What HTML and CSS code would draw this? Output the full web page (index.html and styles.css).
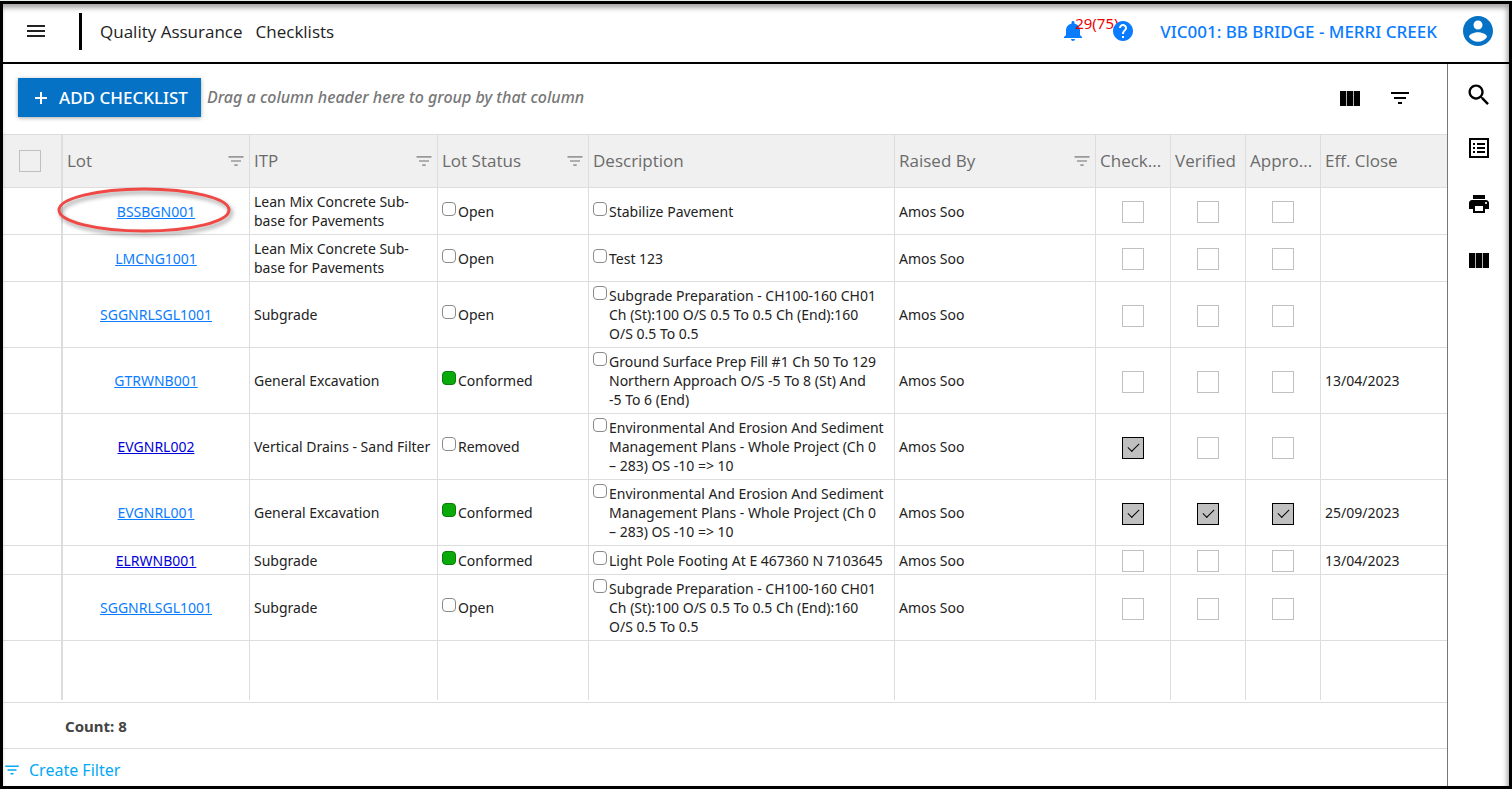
FILE: index.html
```html
<!DOCTYPE html>
<html lang="en">
<head>
  <meta charset="utf-8">
  <title>Quality Assurance - Checklists</title>
  <link rel="stylesheet" href="styles.css">
</head>
<body>
  <!-- shared icons -->
  <svg class="sprite" aria-hidden="true">
    <symbol id="i-filter" viewBox="0 0 24 24"><path d="M10 18h4v-2h-4v2zM3 6v2h18V6H3zm3 7h12v-2H6v2z"/></symbol>
    <symbol id="i-columns" viewBox="0 0 24 24"><path d="M2 5h6.200v15H2zM8.900 5h6.200v15H8.900zM15.800 5H22v15h-6.200z"/></symbol>
  </svg>

  <div class="app">
    <header class="topbar">
      <button class="icon-btn menu" type="button" aria-label="Menu">
        <svg width="24" height="24" viewBox="0 0 24 24"><path d="M3 6h18v2H3zM3 11h18v2H3zM3 16h18v2H3z"/></svg>
      </button>
      <nav class="crumbs">
        <span>Quality Assurance</span>
        <span>Checklists</span>
      </nav>
      <button class="icon-btn bell" type="button" aria-label="Notifications">
        <svg width="24" height="24" viewBox="0 0 24 24"><path d="M12 22c1.100 0 2-.9 2-2h-4c0 1.100.89 2 2 2zm7-6v-5c0-3.070-2.140-5.640-5.500-6.320V3.500c0-.83-.67-1.500-1.500-1.500s-1.500.67-1.500 1.500v1.180C7.130 5.360 5 7.920 5 11v5l-2 2v1h18v-1l-2-2z"/></svg>
        <span class="bell-count">29(75)</span>
      </button>
      <button class="icon-btn help" type="button" aria-label="Help">
        <svg width="24" height="24" viewBox="0 0 24 24"><path d="M12 2C6.480 2 2 6.480 2 12s4.480 10 10 10 10-4.480 10-10S17.520 2 12 2zm1 17h-2v-2h2v2zm2.070-7.750l-.9.920C13.450 12.900 13 13.500 13 15h-2v-.5c0-1.100.45-2.100 1.170-2.830l1.240-1.260c.37-.36.59-.86.59-1.410 0-1.100-.9-2-2-2s-2 .9-2 2H8c0-2.210 1.790-4 4-4s4 1.790 4 4c0 .88-.36 1.680-.93 2.250z"/></svg>
      </button>
      <a class="project" href="#">VIC001: BB BRIDGE - MERRI CREEK</a>
      <button class="icon-btn user" type="button" aria-label="Account">
        <svg width="36" height="36" viewBox="0 0 24 24"><path d="M12 2C6.480 2 2 6.480 2 12s4.480 10 10 10 10-4.480 10-10S17.520 2 12 2zm0 3c1.660 0 3 1.340 3 3s-1.340 3-3 3-3-1.340-3-3 1.340-3 3-3zm0 14.200c-2.500 0-4.710-1.280-6-3.220.03-1.990 4-3.080 6-3.080 1.990 0 5.970 1.090 6 3.080-1.290 1.940-3.500 3.220-6 3.220z"/></svg>
      </button>
    </header>

    <div class="body">
      <main class="main">
        <div class="toolbar">
          <button class="add-btn" type="button">
            <svg width="12" height="12" viewBox="0 0 12 12"><path d="M5 0h2v5h5v2H7v5H5V7H0V5h5z"/></svg>
            ADD CHECKLIST
          </button>
          <span class="group-hint">Drag a column header here to group by that column</span>
          <button class="icon-btn" type="button" aria-label="Column chooser"><svg width="24" height="24"><use href="#i-columns"/></svg></button>
          <button class="icon-btn" type="button" aria-label="Filter"><svg width="24" height="24"><use href="#i-filter"/></svg></button>
        </div>

        <div class="grid-wrap">
          <table class="grid">
            <colgroup>
              <col class="c-select"><col class="c-lot"><col class="c-itp"><col class="c-status"><col class="c-desc"><col class="c-raised"><col class="c-flag"><col class="c-flag"><col class="c-flag"><col>
            </colgroup>
            <thead>
              <tr>
                <th class="select"><input class="check" type="checkbox" aria-label="Select all"></th>
                <th><div class="head"><span>Lot</span><svg width="20" height="20"><use href="#i-filter"/></svg></div></th>
                <th><div class="head"><span>ITP</span><svg width="20" height="20"><use href="#i-filter"/></svg></div></th>
                <th><div class="head"><span>Lot Status</span><svg width="20" height="20"><use href="#i-filter"/></svg></div></th>
                <th><div class="head"><span>Description</span></div></th>
                <th><div class="head"><span>Raised By</span><svg width="20" height="20"><use href="#i-filter"/></svg></div></th>
                <th><div class="head"><span>Check...</span></div></th>
                <th><div class="head"><span>Verified</span></div></th>
                <th><div class="head"><span>Appro...</span></div></th>
                <th><div class="head"><span>Eff. Close</span></div></th>
              </tr>
            </thead>
            <tbody>
              <tr>
                <td class="select"></td>
                <td class="lot marked"><a href="#">BSSBGN001</a>
                  <svg class="ring" width="184" height="56" viewBox="0 0 184 56"><ellipse cx="90" cy="24" rx="85" ry="21"/></svg>
                </td>
                <td>Lean Mix Concrete Sub-base for Pavements</td>
                <td><label class="tick status"><input type="checkbox">Open</label></td>
                <td><label class="tick"><input type="checkbox">Stabilize Pavement</label></td>
                <td>Amos Soo</td>
                <td class="flag"><input class="check" type="checkbox" aria-label="Checked"></td>
                <td class="flag"><input class="check" type="checkbox" aria-label="Verified"></td>
                <td class="flag"><input class="check" type="checkbox" aria-label="Approved"></td>
                <td></td>
              </tr>
              <tr>
                <td class="select"></td>
                <td class="lot"><a href="#">LMCNG1001</a></td>
                <td>Lean Mix Concrete Sub-base for Pavements</td>
                <td><label class="tick status"><input type="checkbox">Open</label></td>
                <td><label class="tick"><input type="checkbox">Test 123</label></td>
                <td>Amos Soo</td>
                <td class="flag"><input class="check" type="checkbox" aria-label="Checked"></td>
                <td class="flag"><input class="check" type="checkbox" aria-label="Verified"></td>
                <td class="flag"><input class="check" type="checkbox" aria-label="Approved"></td>
                <td></td>
              </tr>
              <tr>
                <td class="select"></td>
                <td class="lot"><a href="#">SGGNRLSGL1001</a></td>
                <td>Subgrade</td>
                <td><label class="tick status"><input type="checkbox">Open</label></td>
                <td><label class="tick"><input type="checkbox">Subgrade Preparation - CH100-160 CH01 Ch (St):100 O/S 0.5 To 0.5 Ch (End):160 O/S 0.5 To 0.5</label></td>
                <td>Amos Soo</td>
                <td class="flag"><input class="check" type="checkbox" aria-label="Checked"></td>
                <td class="flag"><input class="check" type="checkbox" aria-label="Verified"></td>
                <td class="flag"><input class="check" type="checkbox" aria-label="Approved"></td>
                <td></td>
              </tr>
              <tr>
                <td class="select"></td>
                <td class="lot"><a href="#">GTRWNB001</a></td>
                <td>General Excavation</td>
                <td><label class="tick status"><input type="checkbox" checked>Conformed</label></td>
                <td><label class="tick"><input type="checkbox"><span>Ground Surface Prep Fill #1 Ch 50 To 129 Northern Approach O/S -5 To 8 (St) And<br>-5 To 6 (End)</span></label></td>
                <td>Amos Soo</td>
                <td class="flag"><input class="check" type="checkbox" aria-label="Checked"></td>
                <td class="flag"><input class="check" type="checkbox" aria-label="Verified"></td>
                <td class="flag"><input class="check" type="checkbox" aria-label="Approved"></td>
                <td>13/04/2023</td>
              </tr>
              <tr>
                <td class="select"></td>
                <td class="lot"><a class="visited" href="#">EVGNRL002</a></td>
                <td class="nowrap">Vertical Drains - Sand Filter</td>
                <td><label class="tick status"><input type="checkbox">Removed</label></td>
                <td><label class="tick"><input type="checkbox">Environmental And Erosion And Sediment Management Plans - Whole Project (Ch 0 – 283) OS -10 =&gt; 10</label></td>
                <td>Amos Soo</td>
                <td class="flag"><input class="check" type="checkbox" aria-label="Checked" checked></td>
                <td class="flag"><input class="check" type="checkbox" aria-label="Verified"></td>
                <td class="flag"><input class="check" type="checkbox" aria-label="Approved"></td>
                <td></td>
              </tr>
              <tr>
                <td class="select"></td>
                <td class="lot"><a href="#">EVGNRL001</a></td>
                <td>General Excavation</td>
                <td><label class="tick status"><input type="checkbox" checked>Conformed</label></td>
                <td><label class="tick"><input type="checkbox">Environmental And Erosion And Sediment Management Plans - Whole Project (Ch 0 – 283) OS -10 =&gt; 10</label></td>
                <td>Amos Soo</td>
                <td class="flag"><input class="check" type="checkbox" aria-label="Checked" checked></td>
                <td class="flag"><input class="check" type="checkbox" aria-label="Verified" checked></td>
                <td class="flag"><input class="check" type="checkbox" aria-label="Approved" checked></td>
                <td>25/09/2023</td>
              </tr>
              <tr>
                <td class="select"></td>
                <td class="lot"><a class="visited" href="#">ELRWNB001</a></td>
                <td>Subgrade</td>
                <td><label class="tick status"><input type="checkbox" checked>Conformed</label></td>
                <td><label class="tick"><input type="checkbox">Light Pole Footing At E 467360 N 7103645</label></td>
                <td>Amos Soo</td>
                <td class="flag"><input class="check" type="checkbox" aria-label="Checked"></td>
                <td class="flag"><input class="check" type="checkbox" aria-label="Verified"></td>
                <td class="flag"><input class="check" type="checkbox" aria-label="Approved"></td>
                <td>13/04/2023</td>
              </tr>
              <tr>
                <td class="select"></td>
                <td class="lot"><a href="#">SGGNRLSGL1001</a></td>
                <td>Subgrade</td>
                <td><label class="tick status"><input type="checkbox">Open</label></td>
                <td><label class="tick"><input type="checkbox">Subgrade Preparation - CH100-160 CH01 Ch (St):100 O/S 0.5 To 0.5 Ch (End):160 O/S 0.5 To 0.5</label></td>
                <td>Amos Soo</td>
                <td class="flag"><input class="check" type="checkbox" aria-label="Checked"></td>
                <td class="flag"><input class="check" type="checkbox" aria-label="Verified"></td>
                <td class="flag"><input class="check" type="checkbox" aria-label="Approved"></td>
                <td></td>
              </tr>
              <tr class="filler">
                <td class="select"></td><td></td><td></td><td></td><td></td><td></td><td></td><td></td><td></td><td></td>
              </tr>
            </tbody>
          </table>
        </div>

        <div class="summary">Count: 8</div>
        <div class="filter-panel">
          <a href="#"><svg width="18" height="18"><use href="#i-filter"/></svg>Create Filter</a>
        </div>
      </main>

      <aside class="side">
        <button class="icon-btn search" type="button" aria-label="Search">
          <svg width="28" height="28" viewBox="0 0 24 24"><path d="M15.500 14h-.79l-.28-.27C15.410 12.590 16 11.110 16 9.500 16 5.910 13.090 3 9.500 3S3 5.910 3 9.500 5.910 16 9.500 16c1.610 0 3.090-.59 4.230-1.570l.27.28v.79l5 4.990L20.490 19l-4.990-5zm-6 0C7.010 14 5 11.990 5 9.500S7.010 5 9.500 5 14 7.010 14 9.500 11.990 14 9.500 14z"/></svg>
        </button>
        <button class="icon-btn" type="button" aria-label="Details">
          <svg width="24" height="24" viewBox="0 0 24 24"><path fill-rule="evenodd" d="M2 2h20v20H2zM4 4v16h16V4zM6 7h2v2H6zM10 7h8v2h-8zM6 11h2v2H6zM10 11h8v2h-8zM6 15h2v2H6zM10 15h8v2h-8z"/></svg>
        </button>
        <button class="icon-btn" type="button" aria-label="Print">
          <svg width="24" height="24" viewBox="0 0 24 24"><path d="M19 8H5c-1.660 0-3 1.340-3 3v6h4v4h12v-4h4v-6c0-1.660-1.340-3-3-3zm-3 11H8v-5h8v5zm3-7c-.55 0-1-.45-1-1s.45-1 1-1 1 .45 1 1-.45 1-1 1zm-1-9H6v4h12V3z"/></svg>
        </button>
        <button class="icon-btn" type="button" aria-label="Columns"><svg width="24" height="24"><use href="#i-columns"/></svg></button>
      </aside>
    </div>
  </div>
</body>
</html>
```
FILE: styles.css
```css
* {
  box-sizing: border-box;
}
body {
  margin: 0;
  padding-top: 1px;
  background: #e3ebe7;
  font-family: "Noto Sans", "Open Sans", sans-serif;
  font-size: 14px;
  line-height: 19px;
  color: #222;
}
.sprite {
  position: absolute;
  width: 0;
  height: 0;
}
svg {
  display: block;
  flex: none;
}
.app {
  position: relative;
  display: flex;
  flex-direction: column;
  min-height: calc(100vh - 1px);
  border: 3px solid #000;
  background: #fff;
}
/* soft inner shadow of the window frame */
.app::after {
  content: "";
  position: absolute;
  inset: 0;
  box-shadow: inset -2px 4px 5px rgba(0, 0, 0, 0.35);
  pointer-events: none;
}
.icon-btn {
  padding: 0;
  border: 0;
  background: none;
  cursor: pointer;
}

/* top bar */
.topbar {
  display: flex;
  align-items: center;
  height: 60px;
  padding: 0 13px 4px 21px;
  border-bottom: 2px solid #000;
}
.menu svg {
  fill: #222;
}
.crumbs {
  display: flex;
  align-items: center;
  gap: 13px;
  flex: 1;
  height: 37px;
  margin-left: 31px;
  padding-left: 18px;
  border-left: 3px solid #000;
  font-family: "Open Sans", "Noto Sans", sans-serif;
  font-size: 17px;
  font-weight: 500;
}
.bell {
  position: relative;
  margin-right: 26px;
  color: #e00;
}
.bell svg,
.help svg {
  fill: #0a7cff;
}
.bell-count {
  position: absolute;
  top: -5px;
  left: 14px;
  font: 15px/19px "Noto Sans", sans-serif;
}
.help {
  position: relative;
}
.project {
  margin: 0 23px 0 25px;
  font-size: 17px;
  font-weight: 500;
  color: #0a7cff;
  text-decoration: none;
}
.user svg {
  fill: #0572c6;
}

/* layout */
.body {
  display: flex;
  flex: 1;
}
.main {
  display: flex;
  flex-direction: column;
  flex: 1;
  min-width: 0;
}
.side {
  display: flex;
  flex-direction: column;
  align-items: center;
  gap: 32px;
  width: 62px;
  padding-top: 17px;
  border-left: 1px solid #777;
}
.search {
  margin-bottom: -5px;
}

/* toolbar */
.toolbar {
  display: flex;
  align-items: center;
  gap: 26px;
  height: 70px;
  padding: 0 35px 3px 15px;
}
.add-btn {
  display: flex;
  align-items: center;
  gap: 12px;
  height: 39px;
  padding: 0 13px 0 17px;
  border: 0;
  background: #0572c6;
  box-shadow: 0 1px 4px rgba(0, 0, 0, 0.35);
  color: #fff;
  font: 500 17px/24px "Noto Sans", sans-serif;
}
.add-btn svg {
  fill: #fff;
}
.group-hint {
  flex: 1;
  margin-left: -20px;
  font-size: 16px;
  font-style: italic;
  font-weight: 500;
  color: #777;
}

/* grid */
.grid-wrap {
  flex: 1;
}
.grid {
  width: 100%;
  table-layout: fixed;
  border-collapse: separate;
  border-spacing: 0;
  border-top: 1px solid #ddd;
}
.c-select { width: 60px; }
.c-lot { width: 187px; }
.c-itp { width: 188px; }
.c-status { width: 151px; }
.c-desc { width: 306px; }
.c-raised { width: 201px; }
.c-flag { width: 75px; }

.grid th,
.grid td {
  padding: 4px;
  border-right: 1px solid #ddd;
  border-bottom: 1px solid #ddd;
}
.grid th:last-child,
.grid td:last-child {
  border-right: 0;
}
.grid th {
  height: 53px;
  padding-right: 3px;
  background: #f0f0f0;
  font-family: "Open Sans", "Noto Sans", sans-serif;
  font-size: 17px;
  font-weight: 500;
  color: #6b6b6b;
  text-align: left;
}
.grid .select {
  padding: 3px 16px;
  border-right: 2px solid #ddd;
}
.head {
  display: flex;
  align-items: center;
}
.head span {
  flex: 1;
  line-height: 22px;
  white-space: nowrap;
}
.head svg {
  fill: #999;
}
.lot {
  text-align: center;
}
.lot a {
  color: #0a7cff;
}
.lot a.visited {
  color: #0000d8;
}
.marked {
  position: relative;
}
/* hand-drawn style highlight round the lot link */
.ring {
  position: absolute;
  top: -2px;
  left: -9px;
  fill: none;
  stroke: #f04844;
  stroke-width: 3;
  filter: drop-shadow(2px 3px 2px rgba(0, 0, 0, 0.4));
  pointer-events: none;
}
.nowrap {
  white-space: nowrap;
}
.tick {
  display: flex;
  align-items: flex-start;
  gap: 2px;
  padding-right: 5px;
}
.tick input {
  flex: none;
  appearance: none;
  width: 14px;
  height: 14px;
  margin: 0;
  border: 1px solid #8a8a8a;
  border-radius: 4px;
  background: #fff;
}
.status input:checked {
  border-color: #0a7d0a;
  background: #0aaa0a;
}
.grid .flag {
  padding: 4px 3px 2px;
}
.check {
  display: block;
  appearance: none;
  width: 22px;
  height: 22px;
  margin: 0;
  border: 1px solid #c0c0c0;
}
.flag .check {
  margin: 0 auto;
}
.check:checked {
  display: grid;
  place-items: center;
  border-color: #000;
  background: #c0c0c0;
}
.check:checked::before {
  content: "";
  width: 10px;
  height: 5px;
  margin-bottom: 4px;
  border-left: 1px solid #000;
  border-bottom: 1px solid #000;
  transform: rotate(-45deg);
}
.filler td {
  height: 59px;
  border-bottom: 0;
}

/* footer */
.summary {
  height: 46px;
  padding: 14px 62px;
  border-top: 1px solid #ddd;
  font-size: 15px;
  font-weight: 700;
  color: #444;
}
.filter-panel {
  height: 38px;
  border-top: 1px solid #ddd;
}
.filter-panel a {
  display: flex;
  align-items: center;
  gap: 8px;
  height: 42px;
  font-size: 16px;
  color: #03a9f4;
  text-decoration: none;
}
.filter-panel svg {
  fill: #03a9f4;
}
```
